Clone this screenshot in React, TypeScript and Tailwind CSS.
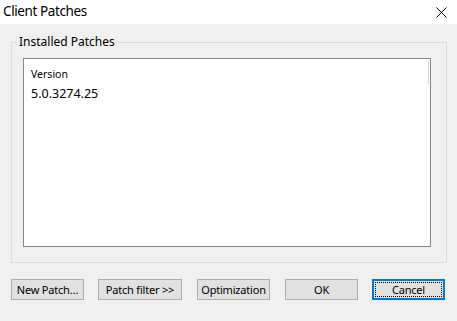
import React from 'react';

const font = { fontFamily: '"Segoe UI", "Noto Sans", "Liberation Sans", sans-serif' };

const buttons = [
  { label: 'New Patch…', w: 'w-[73px]', ml: 'ml-[11px]' },
  { label: 'Patch filter >>', w: 'w-[84px]', ml: 'ml-[14px]' },
  { label: 'Optimization', w: 'w-[73px]', ml: 'ml-[15px]' },
  { label: 'OK', w: 'w-[73px]', ml: 'ml-[15px]' },
];

export default function App() {
  return (
    <div
      className="w-[457px] h-[321px] flex flex-col bg-[#f0f0f0] text-black text-[12px] overflow-hidden"
      style={font}
    >
      {/* Title bar */}
      <div className="h-[24px] bg-white flex items-center justify-between pl-[3px] pr-[10px]">
        <span className="text-[13.5px] leading-none tracking-[-0.4px]">Client Patches</span>
        <svg width="11" height="11" viewBox="0 0 11 11" className="block">
          <path d="M0.5 0.5 L10.5 10.5 M10.5 0.5 L0.5 10.5" stroke="#000" strokeWidth="1" fill="none" />
        </svg>
      </div>

      {/* Group box */}
      <fieldset className="ml-[11px] mt-[10px] w-[436px] h-[229px] border border-[#dcdcdc]">
        <legend className="ml-[5px] px-[2px] leading-[16px]">Installed Patches</legend>
        <div className="ml-[11px] mt-[8px] w-[408px] h-[189px] bg-white border border-[#828790] relative pl-[7px] pt-[5px]">
          <div className="leading-[20px] text-[10.5px]">Version</div>
          <div className="leading-[20px] text-[12.5px]">5.0.3274.25</div>
          <div className="absolute right-[1px] top-[1px] w-[1px] h-[24px] bg-[#d6d6d6]" />
        </div>
      </fieldset>

      {/* Buttons */}
      <div className="flex mt-[16px] text-[11px] tracking-[-0.2px]">
        {buttons.map((b) => (
          <button
            key={b.label}
            className={`${b.w} ${b.ml} h-[21px] bg-[#e1e1e1] border border-[#adadad] leading-none flex items-center justify-center whitespace-nowrap`}
          >
            {b.label}
          </button>
        ))}
        <button className="w-[73px] ml-[14px] h-[21px] bg-[#e1e1e1] border-2 border-[#0078d7] flex items-center justify-center p-[1px]">
          <span className="w-full h-full border border-dotted border-black flex items-center justify-center leading-none">
            Cancel
          </span>
        </button>
      </div>
    </div>
  );
}
